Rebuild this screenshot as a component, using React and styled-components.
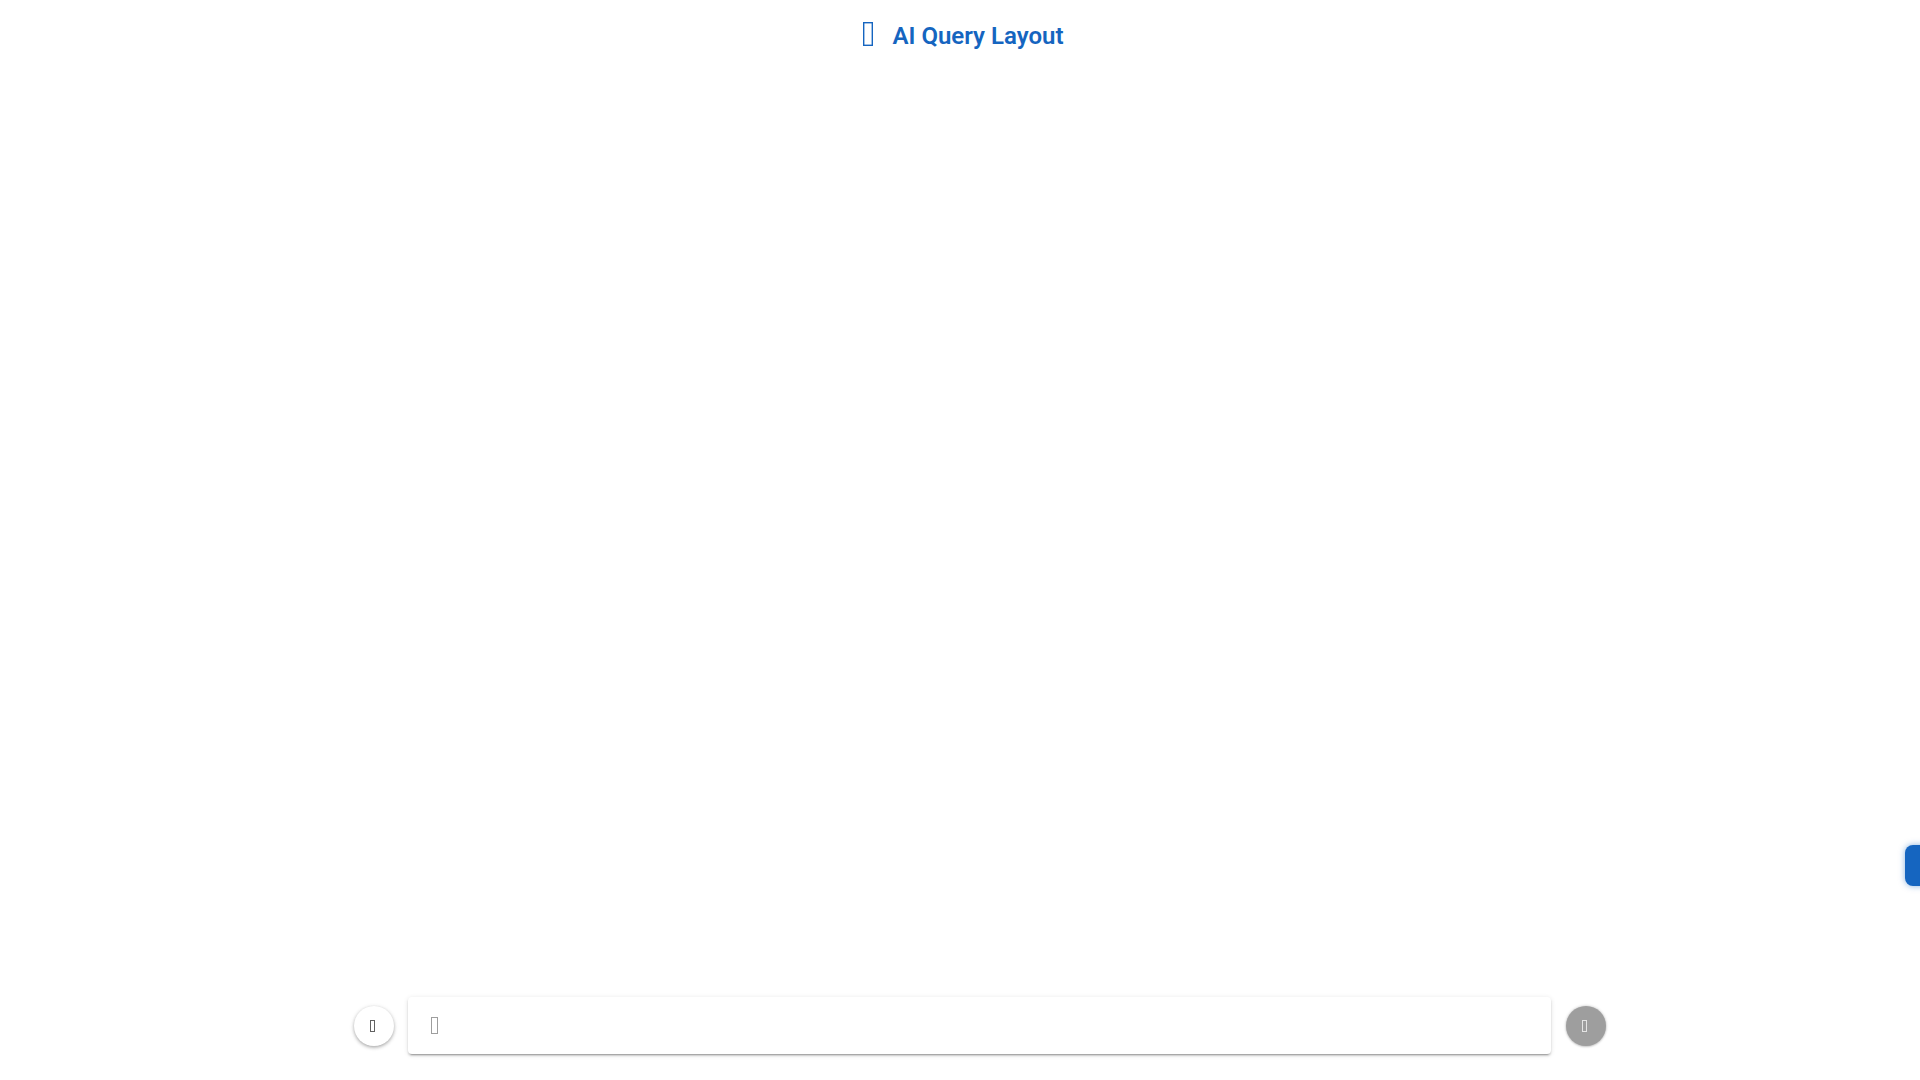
import styled, { createGlobalStyle } from "styled-components";

const GlobalStyle = createGlobalStyle`
  html, body {
    margin: 0;
    padding: 0;
    background: #ffffff;
    font-family: Roboto, "Liberation Sans", sans-serif;
  }
`;

const Page = styled.div`
  height: 100vh;
  display: flex;
  flex-direction: column;
  overflow: hidden;
`;

const Header = styled.header`
  display: flex;
  justify-content: center;
  align-items: center;
  gap: 20px;
  padding: 12px 0 0 6px;
  height: 48px;
  color: #1565c0;
`;

const Title = styled.h1`
  margin: 0;
  font-size: 24px;
  font-weight: 600;
`;

const Spacer = styled.main`
  flex: 1;
`;

const Composer = styled.footer`
  display: flex;
  align-items: center;
  justify-content: center;
  gap: 14px;
  padding: 0 0 26px 40px;
`;

const RoundButton = styled.button`
  width: 40px;
  height: 40px;
  flex-shrink: 0;
  margin-left: ${({ $disabled }) => ($disabled ? "1px" : "0")};
  border: 0;
  padding: 0 3px 0 0;
  border-radius: 50%;
  display: flex;
  align-items: center;
  justify-content: center;
  color: ${({ $disabled }) => ($disabled ? "#e4e4e4" : "#616161")};
  background: ${({ $disabled }) => ($disabled ? "#9e9e9e" : "#ffffff")};
  box-shadow: ${({ $disabled }) =>
    $disabled
      ? "0 0 3px rgba(0, 0, 0, 0.25), 0 1px 2px rgba(0, 0, 0, 0.12)"
      : "0 2px 4px -1px rgba(0, 0, 0, 0.2), 0 1px 5px rgba(0, 0, 0, 0.14), 0 1px 3px rgba(0, 0, 0, 0.12)"};
`;

const InputCard = styled.div`
  width: 1143px;
  height: 57px;
  box-sizing: border-box;
  padding-left: 23px;
  display: flex;
  align-items: center;
  border-radius: 4px;
  color: #9e9e9e;
  background: #ffffff;
  box-shadow: 0 3px 1px -2px rgba(0, 0, 0, 0.2), 0 2px 2px rgba(0, 0, 0, 0.14), 0 1px 5px rgba(0, 0, 0, 0.12);
`;

const TitleIcon = styled.svg`
  margin-bottom: 4px;
`;

const SideTab = styled.div`
  position: fixed;
  right: -10px;
  top: 845px;
  width: 25px;
  height: 41px;
  border-radius: 8px;
  background: #1565c0;
  box-shadow: 0 0 6px rgba(21, 101, 192, 0.5);
`;

// the icon font never loaded in the reference, so its icons show as empty boxes
function MissingGlyph({ w, h, stroke = 1, as: Comp = "svg" }) {
  return (
    <Comp width={w} height={h} viewBox={`0 0 ${w} ${h}`} fill="none">
      <rect
        x={stroke / 2}
        y={stroke / 2}
        width={w - stroke}
        height={h - stroke}
        stroke="currentColor"
        strokeWidth={stroke}
      />
    </Comp>
  );
}

export default function App() {
  return (
    <Page>
      <GlobalStyle />
      <Header>
        <MissingGlyph as={TitleIcon} w={10} h={24} stroke={1.4} />
        <Title>AI Query Layout</Title>
      </Header>
      <Spacer />
      <Composer>
        <RoundButton>
          <MissingGlyph w={5} h={12} />
        </RoundButton>
        <InputCard>
          <MissingGlyph w={7} h={17} />
        </InputCard>
        <RoundButton $disabled>
          <MissingGlyph w={5} h={12} />
        </RoundButton>
      </Composer>
      <SideTab />
    </Page>
  );
}
